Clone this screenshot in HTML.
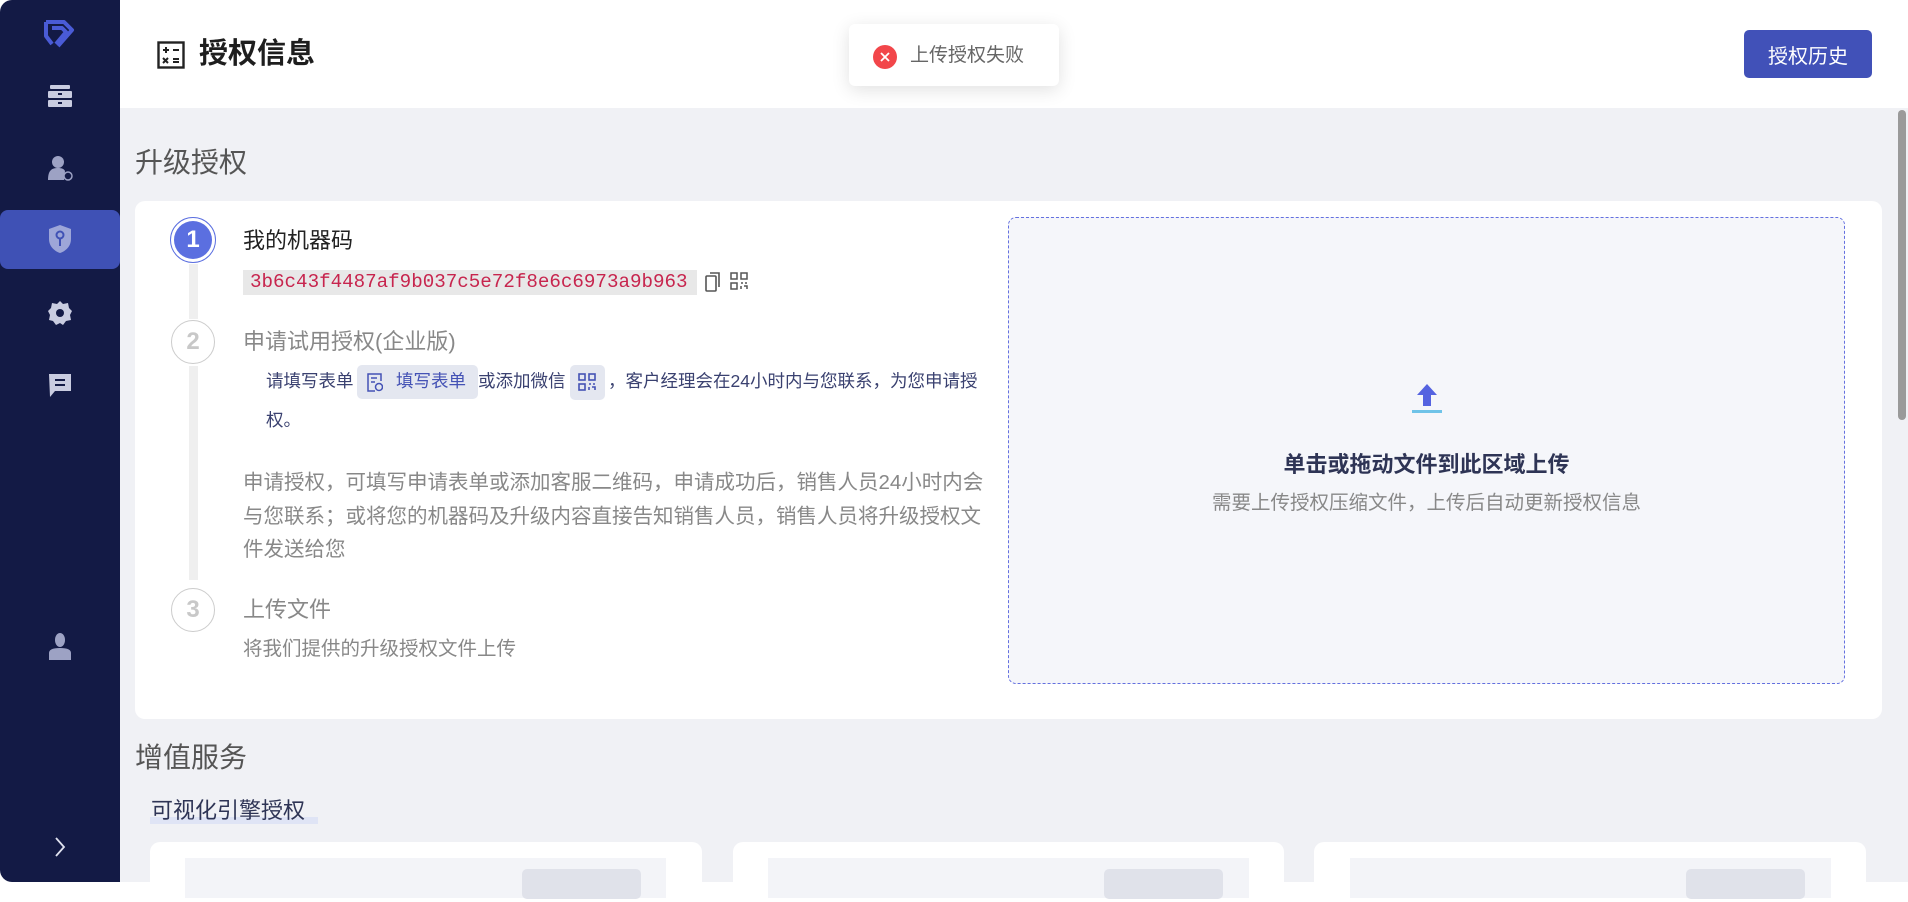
<!DOCTYPE html>
<html><head><meta charset="utf-8"><style>
*{box-sizing:border-box;margin:0;padding:0}
body{width:1908px;height:882px;overflow:hidden;background:#fff;font-family:"Liberation Sans","Noto Sans CJK SC",sans-serif;position:relative}
.abs{position:absolute}
.sb{left:0;top:0;width:120px;height:882px;background:#131a45;border-radius:12px 0 0 12px}
.main{left:120px;top:108px;width:1776px;height:774px;background:#f0f1f5}
.hdr{left:120px;top:0;width:1788px;height:108px;background:#fff}
.t{white-space:nowrap;line-height:1}
.circ{width:44px;height:44px;border-radius:50%;border:1.5px solid #ccc;display:flex;align-items:center;justify-content:center;font-weight:bold;font-size:24px;color:#c8c8c8;background:#fff}
.vl{width:9px;background:#efefef;left:189px}
</style></head><body>
<div class="abs sb"></div>
<svg class="abs" style="left:42px;top:14px" width="36" height="36" viewBox="0 0 36 36"><path d="M4 8 L22 8 L30 16 L16 32 M10 14 L20 14 L24 18 L14 30 M4 8 L4 22 L10 30" fill="none" stroke="#4a5bd6" stroke-width="4" stroke-linejoin="round"/></svg>
<svg class="abs" style="left:48px;top:83px" width="24" height="26" viewBox="0 0 24 26"><rect x="2" y="2" width="20" height="4" rx="1" fill="#c9cce0"/><rect x="0" y="8" width="24" height="7" rx="1" fill="#c9cce0"/><rect x="0" y="17" width="24" height="7" rx="1" fill="#c9cce0"/><rect x="10" y="10" width="4" height="2" fill="#131a45"/><rect x="10" y="19" width="4" height="2" fill="#131a45"/></svg>
<svg class="abs" style="left:48px;top:155px" width="26" height="26" viewBox="0 0 26 26"><circle cx="10" cy="7" r="6" fill="#9da2c4"/><path d="M0 25 C0 15 4 13 10 13 C14 13 16 14 17 16 L16 25Z" fill="#9da2c4"/><circle cx="20" cy="21" r="4" fill="none" stroke="#9da2c4" stroke-width="1.5"/></svg>
<div class="abs" style="left:0;top:210px;width:120px;height:59px;background:#3f51b5;border-radius:8px"></div>
<svg class="abs" style="left:48px;top:224px" width="24" height="30" viewBox="0 0 24 30"><path d="M12 1 L23 5 L23 15 C23 22 18 27 12 29 C6 27 1 22 1 15 L1 5Z" fill="#9da6d8"/><circle cx="12" cy="11" r="3.5" fill="none" stroke="#3f51b5" stroke-width="2"/><path d="M12 14 V22" stroke="#3f51b5" stroke-width="2"/></svg>
<svg class="abs" style="left:47px;top:300px" width="26" height="26" viewBox="0 0 26 26"><path d="M13 1 L16 4 L21 3 L22 8 L25 11 L23 15 L24 20 L19 21 L16 25 L13 23 L9 25 L6 21 L2 20 L3 15 L1 11 L4 8 L5 3 L10 4Z" fill="#c9cce0"/><circle cx="13" cy="13" r="4" fill="#131a45"/></svg>
<svg class="abs" style="left:48px;top:372px" width="24" height="26" viewBox="0 0 24 26"><path d="M1 2 H23 V19 H7 L2 25 Z" fill="#c9cce0"/><rect x="7" y="7" width="10" height="2" fill="#131a45"/><rect x="7" y="12" width="10" height="2" fill="#131a45"/></svg>
<svg class="abs" style="left:48px;top:633px" width="24" height="28" viewBox="0 0 24 28"><ellipse cx="12" cy="7" rx="5" ry="7" fill="#9da2c4"/><path d="M1 27 V20 C1 17 4 15 12 15 C20 15 23 17 23 20 V27Z" fill="#9da2c4"/></svg>
<svg class="abs" style="left:53px;top:836px" width="14" height="22" viewBox="0 0 14 22"><path d="M3 2 L11 11 L3 20" fill="none" stroke="#e0e2ef" stroke-width="1.8"/></svg>

<div class="abs hdr"></div>
<svg class="abs" style="left:157px;top:41px" width="28" height="28" viewBox="0 0 28 28"><rect x="1.5" y="1.5" width="25" height="25" fill="none" stroke="#222" stroke-width="2.4"/><path d="M6 9 H12 M9 6 V12 M16 9 H22 M6 17 L11 22 M11 17 L6 22 M16 18 H22 M16 21 H22" stroke="#222" stroke-width="2"/></svg>
<div class="abs t" style="left:199px;top:40px;font-size:29px;font-weight:bold;color:#1e1e1e">授权信息</div>
<div class="abs" style="left:849px;top:24px;width:210px;height:62px;background:#fff;border-radius:6px;box-shadow:0 4px 18px rgba(0,0,0,.12)"></div>
<svg class="abs" style="left:873px;top:45px" width="24" height="24" viewBox="0 0 24 24"><circle cx="12" cy="12" r="12" fill="#f2464a"/><path d="M8 8 L16 16 M16 8 L8 16" stroke="#fff" stroke-width="1.8"/></svg>
<div class="abs t" style="left:910px;top:46px;font-size:19px;color:#666">上传授权失败</div>
<div class="abs" style="left:1744px;top:30px;width:128px;height:48px;background:#4151b8;border-radius:5px;color:#fff;font-size:20px;display:flex;align-items:center;justify-content:center">授权历史</div>

<div class="abs main"></div>
<div class="abs" style="left:1896px;top:108px;width:12px;height:774px;background:#f0f1f5"></div>
<div class="abs" style="left:1898px;top:110px;width:8px;height:310px;background:#9a9a9a;border-radius:4px"></div>

<div class="abs t" style="left:135px;top:149px;font-size:28px;color:#555">升级授权</div>
<div class="abs" style="left:135px;top:201px;width:1747px;height:518px;background:#fff;border-radius:10px"></div>

<div class="abs vl" style="top:264px;height:55px"></div>
<div class="abs vl" style="top:366px;height:214px"></div>
<div class="abs" style="left:170px;top:217px;width:46px;height:46px;border-radius:50%;border:1px solid #5b6fe0;display:flex;align-items:center;justify-content:center"><div style="width:38px;height:38px;border-radius:50%;background:#5b6fe0;color:#fff;font-weight:bold;font-size:24px;display:flex;align-items:center;justify-content:center">1</div></div>
<div class="abs t" style="left:243px;top:230px;font-size:22px;color:#222">我的机器码</div>
<div class="abs t" style="left:243px;top:270px;width:454px;height:25px;background:#e8e8e8;color:#c7254e;font-family:'Liberation Mono',monospace;font-size:19.2px;padding:3px 0 0 7px">3b6c43f4487af9b037c5e72f8e6c6973a9b963</div>
<svg class="abs" style="left:704px;top:271px" width="18" height="22" viewBox="0 0 18 22"><rect x="2" y="5" width="10" height="15" rx="1" fill="none" stroke="#555" stroke-width="1.6"/><path d="M6 2 H15 V16" fill="none" stroke="#555" stroke-width="1.6"/></svg>
<svg class="abs" style="left:730px;top:272px" width="18" height="18" viewBox="0 0 18 18" fill="none" stroke="#555" stroke-width="1.5"><rect x="1" y="1" width="6" height="6"/><rect x="11" y="1" width="6" height="6"/><rect x="1" y="11" width="6" height="6"/><path d="M11 11 H13 M15 11 H17 M11 14 V17 M14 14 H17 V17"/></svg>

<div class="abs circ" style="left:171px;top:320px">2</div>
<div class="abs t" style="left:243px;top:331px;font-size:22px;color:#888">申请试用授权(企业版)</div>
<div class="abs t" style="left:266px;top:373px;font-size:17.5px;color:#3a4170">请填写表单</div>
<div class="abs" style="left:357px;top:365px;width:121px;height:34px;background:#e4e7f0;border-radius:5px"></div>
<svg class="abs" style="left:367px;top:373px" width="16" height="19" viewBox="0 0 16 19" fill="none" stroke="#4452b5" stroke-width="1.5"><path d="M14 8 V1 H1 V18 H8"/><path d="M4 5 H10 M4 9 H8"/><circle cx="12" cy="14" r="3.5"/></svg>
<div class="abs t" style="left:396px;top:373px;font-size:17.5px;color:#4452b5">填写表单</div>
<div class="abs t" style="left:478px;top:373px;font-size:17.5px;color:#3a4170">或添加微信</div>
<div class="abs" style="left:570px;top:365px;width:35px;height:35px;background:#e4e7f0;border-radius:5px"></div>
<svg class="abs" style="left:578px;top:373px" width="18" height="18" viewBox="0 0 18 18" fill="none" stroke="#4452b5" stroke-width="1.6"><rect x="1" y="1" width="6" height="6"/><rect x="11" y="1" width="6" height="6"/><rect x="1" y="11" width="6" height="6"/><path d="M11 11 H13 M15 11 H17 M11 14 V17 M14 14 H17 V17"/></svg>
<div class="abs t" style="left:608px;top:373px;font-size:17.5px;color:#3a4170">，客户经理会在24小时内与您联系，为您申请授</div>
<div class="abs t" style="left:266px;top:412px;font-size:17.5px;color:#3a4170">权。</div>
<div class="abs" style="left:243px;top:466px;width:752px;font-size:20.5px;line-height:33.5px;color:#888">申请授权，可填写申请表单或添加客服二维码，申请成功后，销售人员24小时内会与您联系；或将您的机器码及升级内容直接告知销售人员，销售人员将升级授权文件发送给您</div>

<div class="abs circ" style="left:171px;top:588px">3</div>
<div class="abs t" style="left:243px;top:599px;font-size:22px;color:#888">上传文件</div>
<div class="abs t" style="left:243px;top:640px;font-size:19.5px;color:#888">将我们提供的升级授权文件上传</div>

<div class="abs" style="left:1008px;top:217px;width:837px;height:467px;background:#f5f6fa;border:1px dashed #6470e0;border-radius:8px"></div>
<svg class="abs" style="left:1411px;top:382px" width="32" height="34" viewBox="0 0 32 34"><path d="M16 2 L26 13 H20 V24 H12 V13 H6Z" fill="#5563e0"/><rect x="1" y="28" width="30" height="3" fill="#6fc3e8"/></svg>
<div class="abs t" style="left:1008px;top:454px;width:837px;text-align:center;font-size:22px;font-weight:bold;color:#2e3455">单击或拖动文件到此区域上传</div>
<div class="abs t" style="left:1008px;top:494px;width:837px;text-align:center;font-size:19.5px;color:#888">需要上传授权压缩文件，上传后自动更新授权信息</div>

<div class="abs t" style="left:135px;top:744px;font-size:28px;color:#555">增值服务</div>
<div class="abs" style="left:150px;top:817px;width:168px;height:7px;background:#dfe4f5"></div>
<div class="abs t" style="left:151px;top:800px;font-size:22px;color:#2e3455">可视化引擎授权</div>

<div class="abs" style="left:150px;top:842px;width:552px;height:60px;background:#fff;border-radius:10px"></div>
<div class="abs" style="left:185px;top:858px;width:481px;height:40px;background:#f3f4f8"></div>
<div class="abs" style="left:522px;top:869px;width:119px;height:30px;background:#e0e2ea;border-radius:5px"></div>
<div class="abs" style="left:733px;top:842px;width:551px;height:60px;background:#fff;border-radius:10px"></div>
<div class="abs" style="left:768px;top:858px;width:481px;height:40px;background:#f3f4f8"></div>
<div class="abs" style="left:1104px;top:869px;width:119px;height:30px;background:#e0e2ea;border-radius:5px"></div>
<div class="abs" style="left:1314px;top:842px;width:552px;height:60px;background:#fff;border-radius:10px"></div>
<div class="abs" style="left:1350px;top:858px;width:481px;height:40px;background:#f3f4f8"></div>
<div class="abs" style="left:1686px;top:869px;width:119px;height:30px;background:#e0e2ea;border-radius:5px"></div>
</body></html>
